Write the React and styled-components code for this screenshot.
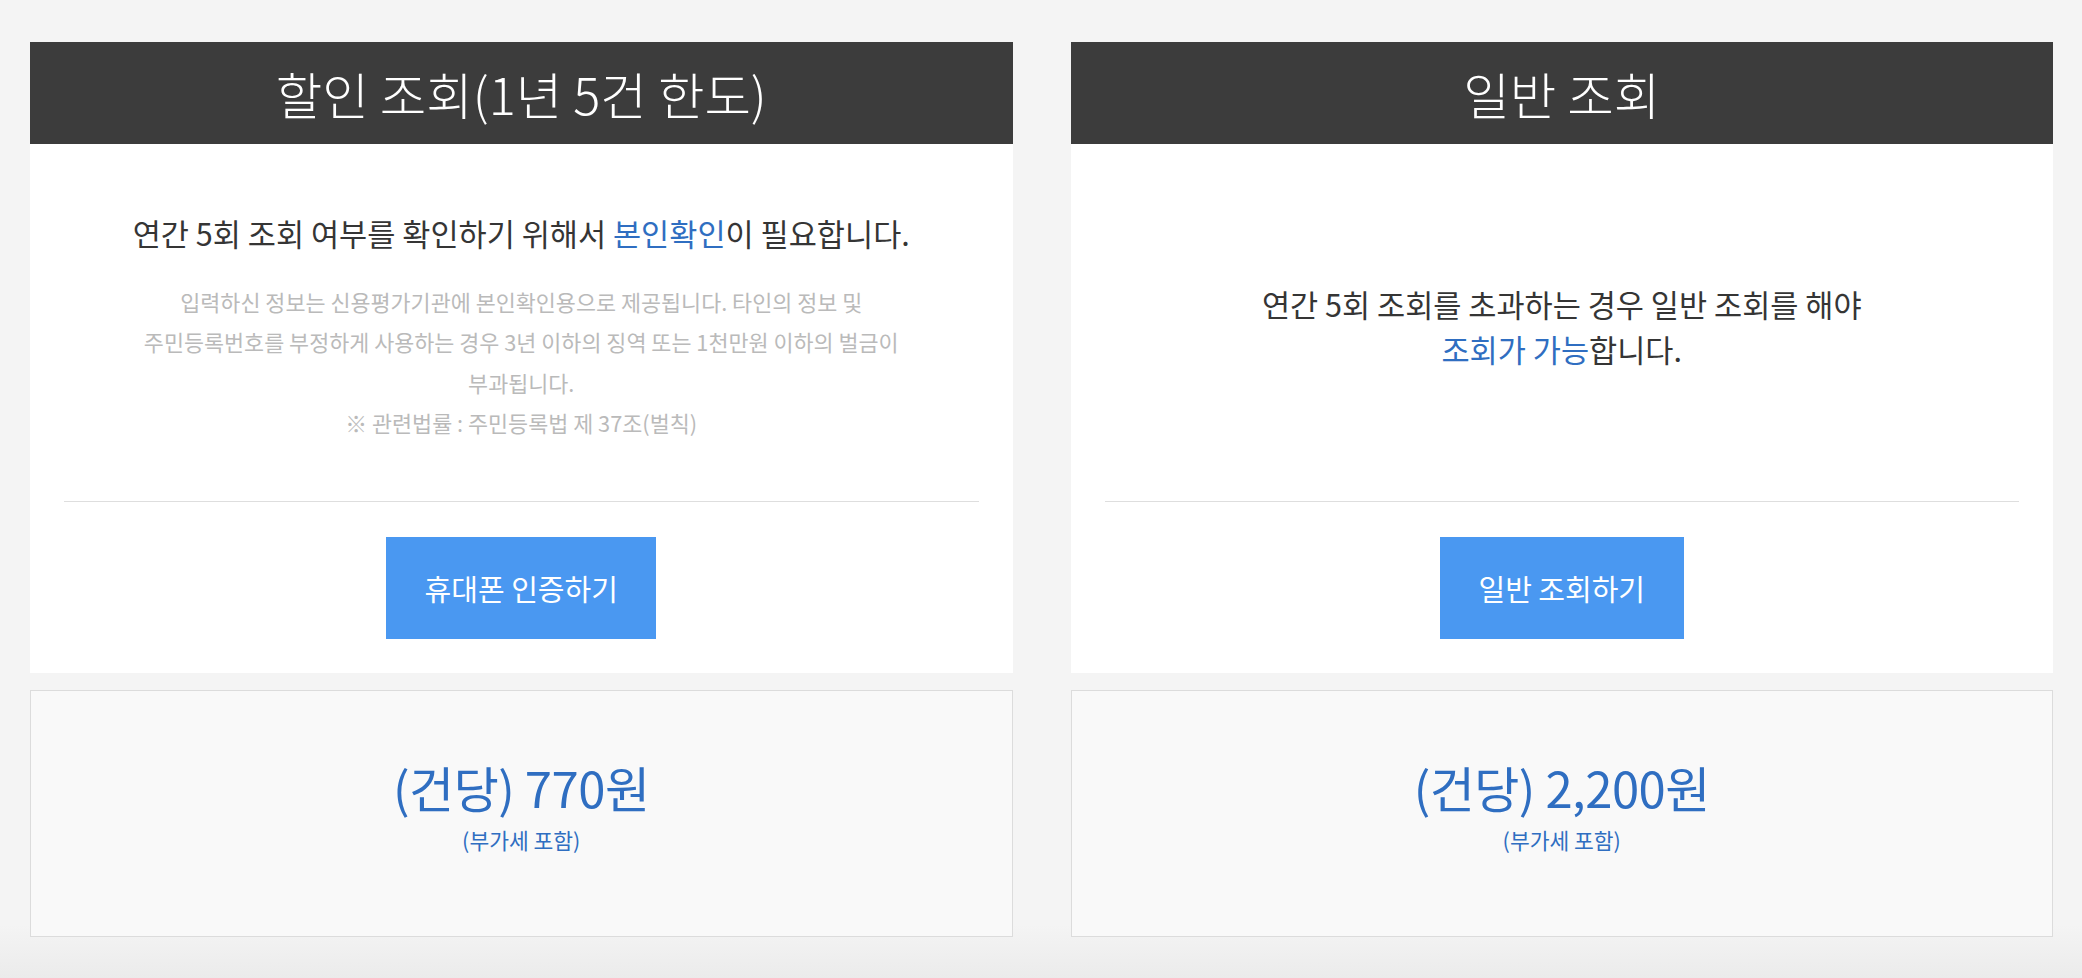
import React from "react";
import styled, { createGlobalStyle } from "styled-components";

const Global = createGlobalStyle`
  html, body { margin: 0; padding: 0; }
  body {
    font-family: "Noto Sans CJK KR", "Noto Sans", sans-serif;
    background: #f4f4f4;
  }
`;

const Page = styled.div`
  min-height: 978px;
  box-sizing: border-box;
  padding: 42px 29px 0 30px;
  background: linear-gradient(to bottom, #f4f4f4 0, #f4f4f4 925px, #ebebeb 978px);
  display: grid;
  grid-template-columns: 1fr 1fr;
  column-gap: 58px;
  align-items: start;
`;

const Column = styled.section`
  display: flex;
  flex-direction: column;
  gap: 17px;
`;

const Card = styled.div`
  background: #fff;
  display: flex;
  flex-direction: column;
`;

const Header = styled.h2`
  margin: 0;
  height: 102px;
  background: #3c3c3c;
  color: #fff;
  display: flex;
  align-items: center;
  justify-content: center;
  font-size: 50.5px;
  font-weight: 300;
`;

const InfoArea = styled.div`
  height: 357px;
  box-sizing: border-box;
  padding-top: 9px;
  display: flex;
  flex-direction: column;
  align-items: center;
  justify-content: center;
  text-align: center;
`;

const Lead = styled.p`
  margin: 0;
  font-size: 30.6px;
  line-height: 45px;
  color: #353535;
`;

const Highlight = styled.span`
  color: #2f6ec1;
`;

const Notice = styled.p`
  margin: 26px 0 0;
  max-width: 790px;
  font-size: 21.8px;
  line-height: 40.5px;
  color: #bababa;
  word-break: keep-all;
`;

const Divider = styled.hr`
  margin: 0 34px;
  border: 0;
  border-top: 1px solid #dedede;
  height: 0;
`;

const ActionRow = styled.div`
  display: flex;
  justify-content: center;
  padding: 35px 0 34px;
`;

const ActionButton = styled.button`
  height: 102px;
  padding: 0 38.5px;
  border: 0;
  border-radius: 0;
  background: #4a98f1;
  color: #fff;
  font-family: inherit;
  font-size: 29px;
  font-weight: 400;
  cursor: pointer;
`;

const PriceBox = styled.div`
  height: 247px;
  box-sizing: border-box;
  padding-bottom: 16px;
  border: 1px solid #dcdcdc;
  background: #f9f9f9;
  display: flex;
  flex-direction: column;
  align-items: center;
  justify-content: center;
  color: #2f6ec1;
`;

const Price = styled.div`
  font-size: 49px;
  line-height: 60px;
  letter-spacing: -0.5px;
`;

const PriceNote = styled.div`
  margin-top: 8px;
  font-size: 21.5px;
  line-height: 30px;
`;

export default function App() {
  return (
    <>
      <Global />
      <Page>
        <Column>
          <Card>
            <Header>할인 조회(1년 5건 한도)</Header>
            <InfoArea>
              <Lead>
                연간 5회 조회 여부를 확인하기 위해서 <Highlight>본인확인</Highlight>이 필요합니다.
              </Lead>
              <Notice>
                입력하신 정보는 신용평가기관에 본인확인용으로 제공됩니다. 타인의 정보 및 주민등록번호를 부정하게 사용하는 경우 3년 이하의 징역 또는 1천만원 이하의 벌금이 부과됩니다.
                <br />※ 관련법률 : 주민등록법 제 37조(벌칙)
              </Notice>
            </InfoArea>
            <Divider />
            <ActionRow>
              <ActionButton>휴대폰 인증하기</ActionButton>
            </ActionRow>
          </Card>
          <PriceBox>
            <Price>(건당) 770원</Price>
            <PriceNote>(부가세 포함)</PriceNote>
          </PriceBox>
        </Column>
        <Column>
          <Card>
            <Header>일반 조회</Header>
            <InfoArea>
              <Lead>
                연간 5회 조회를 초과하는 경우 일반 조회를 해야
                <br />
                <Highlight>조회가 가능</Highlight>합니다.
              </Lead>
            </InfoArea>
            <Divider />
            <ActionRow>
              <ActionButton>일반 조회하기</ActionButton>
            </ActionRow>
          </Card>
          <PriceBox>
            <Price>(건당) 2,200원</Price>
            <PriceNote>(부가세 포함)</PriceNote>
          </PriceBox>
        </Column>
      </Page>
    </>
  );
}
